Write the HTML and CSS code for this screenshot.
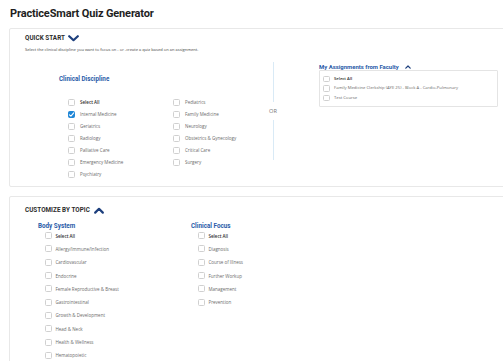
FILE: index.html
```html
<!DOCTYPE html>
<html>
<head>
<meta charset="utf-8">
<link rel="stylesheet" href="styles.css">
</head>
<body>
<h1 class="title">PracticeSmart Quiz Generator</h1>

<section class="card card-quick">
  <div class="card-head">
    <span class="head-text">QUICK START</span>
    <svg class="chev-down" width="11" height="7" viewBox="0 0 11 7"><path d="M1.2 1.2 L5.5 5.2 L9.8 1.2" fill="none" stroke="#1d3f7d" stroke-width="2.2" stroke-linecap="round" stroke-linejoin="round"/></svg>
  </div>
  <p class="desc">Select the clinical discipline you want to focus on - or -create a quiz based on an assignment.</p>
  <div class="quick-body">
    <div class="discipline">
      <h2 class="sub-title">Clinical Discipline</h2>
      <div class="disc-grid">
        <div class="disc-col first">
          <label class="item"><span class="box"></span><span class="lbl strong">Select All</span></label>
          <label class="item"><span class="box checked"><svg width="7" height="7" viewBox="0 0 7 7"><path d="M1.4 3.8 L2.9 5.2 L5.7 1.9" fill="none" stroke="#fff" stroke-width="1.1" stroke-linecap="round" stroke-linejoin="round"/></svg></span><span class="lbl">Internal Medicine</span></label>
          <label class="item"><span class="box"></span><span class="lbl">Geriatrics</span></label>
          <label class="item"><span class="box"></span><span class="lbl">Radiology</span></label>
          <label class="item"><span class="box"></span><span class="lbl">Palliative Care</span></label>
          <label class="item"><span class="box"></span><span class="lbl">Emergency Medicine</span></label>
          <label class="item"><span class="box"></span><span class="lbl">Psychiatry</span></label>
        </div>
        <div class="disc-col">
          <label class="item"><span class="box"></span><span class="lbl">Pediatrics</span></label>
          <label class="item"><span class="box"></span><span class="lbl">Family Medicine</span></label>
          <label class="item"><span class="box"></span><span class="lbl">Neurology</span></label>
          <label class="item"><span class="box"></span><span class="lbl">Obstetrics &amp; Gynecology</span></label>
          <label class="item"><span class="box"></span><span class="lbl">Critical Care</span></label>
          <label class="item"><span class="box"></span><span class="lbl">Surgery</span></label>
        </div>
      </div>
    </div>
    <div class="divider">
      <span class="vline"></span>
      <span class="or">OR</span>
      <span class="vline"></span>
    </div>
    <div class="assign">
      <div class="assign-head">
        <span class="sub-title small">My Assignments from Faculty</span>
        <svg class="chev-small" width="6" height="4" viewBox="0 0 6 4"><path d="M0.8 3.2 L3 1 L5.2 3.2" fill="none" stroke="#1d3f7d" stroke-width="1.2" stroke-linecap="round" stroke-linejoin="round"/></svg>
      </div>
      <div class="assign-box">
        <label class="aitem"><span class="box sm"></span><span class="lbl strong">Select All</span></label>
        <label class="aitem"><span class="box sm"></span><span class="lbl">Family Medicine Clerkship (AYE 25) - Block A - Cardio-Pulmonary</span></label>
        <label class="aitem"><span class="box sm"></span><span class="lbl">Test Course</span></label>
      </div>
    </div>
  </div>
</section>

<section class="card card-topic">
  <div class="card-head tall">
    <span class="head-text">CUSTOMIZE BY TOPIC</span>
    <svg class="chev-up" width="10" height="7" viewBox="0 0 10 7"><path d="M1.2 5.6 L5 1.8 L8.8 5.6" fill="none" stroke="#1d3f7d" stroke-width="2.2" stroke-linecap="round" stroke-linejoin="round"/></svg>
  </div>
  <div class="topic-body">
    <div class="topic-col body-sys">
      <h2 class="sub-title topic-title">Body System</h2>
      <label class="titem"><span class="box"></span><span class="lbl strong">Select All</span></label>
      <label class="titem"><span class="box"></span><span class="lbl">Allergy/Immune/Infection</span></label>
      <label class="titem"><span class="box"></span><span class="lbl">Cardiovascular</span></label>
      <label class="titem"><span class="box"></span><span class="lbl">Endocrine</span></label>
      <label class="titem"><span class="box"></span><span class="lbl">Female Reproductive &amp; Breast</span></label>
      <label class="titem"><span class="box"></span><span class="lbl">Gastrointestinal</span></label>
      <label class="titem"><span class="box"></span><span class="lbl">Growth &amp; Development</span></label>
      <label class="titem"><span class="box"></span><span class="lbl">Head &amp; Neck</span></label>
      <label class="titem"><span class="box"></span><span class="lbl">Health &amp; Wellness</span></label>
      <label class="titem"><span class="box"></span><span class="lbl">Hematopoietic</span></label>
    </div>
    <div class="topic-col">
      <h2 class="sub-title topic-title">Clinical Focus</h2>
      <label class="titem"><span class="box"></span><span class="lbl strong">Select All</span></label>
      <label class="titem"><span class="box"></span><span class="lbl">Diagnosis</span></label>
      <label class="titem"><span class="box"></span><span class="lbl">Course of Illness</span></label>
      <label class="titem"><span class="box"></span><span class="lbl">Further Workup</span></label>
      <label class="titem"><span class="box"></span><span class="lbl">Management</span></label>
      <label class="titem"><span class="box"></span><span class="lbl">Prevention</span></label>
    </div>
  </div>
</section>
</body>
</html>
```

FILE: styles.css
```css
html, body {
  margin: 0;
  padding: 0;
  background: #ffffff;
  overflow: hidden;
}
body {
  width: 503px;
  height: 361px;
  font-family: "Open Sans", "Liberation Sans", sans-serif;
  color: #333;
}
.title {
  margin: 0;
  height: 28px;
  line-height: 27px;
  padding-left: 10px;
  font-family: Roboto, "Liberation Sans", sans-serif;
  font-weight: 700;
  font-size: 11px;
  letter-spacing: -0.15px;
  color: #1e1e1e;
}
.card {
  margin-left: 9px;
  width: 540px;
  border: 1px solid #e8e8e8;
  border-radius: 2px;
  background: #fff;
}
.card-quick {
  height: 157px;
}
.card-topic {
  margin-top: 9px;
  height: 200px;
}
.card-head {
  height: 18px;
  display: flex;
  align-items: center;
  padding-left: 15px;
}
.card-head.tall {
  height: 26px;
}
.head-text {
  font-family: Roboto, "Liberation Sans", sans-serif;
  font-weight: 700;
  font-size: 6.3px;
  color: #2b2b2b;
  letter-spacing: 0.05px;
}
.chev-down {
  margin-left: 3px;
}
.chev-up {
  margin-left: 4px;
  margin-top: 1px;
}
.desc {
  margin: 0;
  padding-left: 15px;
  height: 6px;
  line-height: 6px;
  font-size: 4.05px;
  color: #444;
}
.quick-body {
  display: flex;
  margin-top: 9px;
  padding-left: 49px;
}
.discipline {
  width: 208px;
  padding-top: 13px;
}
.sub-title {
  margin: 0;
  font-family: Roboto, "Liberation Sans", sans-serif;
  font-weight: 700;
  font-size: 6.3px;
  line-height: 8px;
  color: #2a5ba8;
}
.sub-title.small {
  font-size: 5.95px;
  line-height: 7px;
}
.disc-grid {
  display: flex;
  margin-top: 13px;
  margin-left: 9px;
}
.disc-col {
  display: flex;
  flex-direction: column;
}
.disc-col.first {
  width: 105px;
}
.item {
  display: flex;
  align-items: center;
  gap: 5px;
  height: 12px;
}
.box {
  box-sizing: border-box;
  width: 7px;
  height: 7px;
  border: 1px solid #d0d0d0;
  border-radius: 1.5px;
  background: #fff;
  flex: none;
  display: flex;
  align-items: center;
  justify-content: center;
}
.box.checked {
  background: #1f86d6;
  border-color: #1f86d6;
}
.box.checked svg {
  display: block;
  margin: -1px;
}
.box.sm {
  width: 6.5px;
  height: 6.5px;
}
.lbl {
  font-size: 4.5px;
  line-height: 6px;
  color: #6b6b6b;
  white-space: nowrap;
}
.lbl.strong {
  color: #2d2d2d;
  font-weight: 600;
}
.divider {
  width: 12px;
  display: flex;
  flex-direction: column;
  align-items: center;
}
.vline {
  width: 1px;
  height: 40px;
  background: #d9eaf6;
}
.or {
  height: 18px;
  line-height: 18px;
  font-size: 5.6px;
  color: #777;
}
.assign {
  margin-left: 40px;
  width: 179px;
}
.assign-head {
  display: flex;
  align-items: center;
  gap: 6px;
  height: 8px;
}
.chev-small {
  margin-top: 2px;
}
.assign-box {
  box-sizing: border-box;
  height: 37px;
  border: 1px solid #e4e4e4;
  border-radius: 1px;
  padding: 3px 0 0 3px;
  display: flex;
  flex-direction: column;
}
.aitem {
  display: flex;
  align-items: center;
  gap: 4.5px;
  height: 9.5px;
}
.aitem .lbl {
  font-size: 4.2px;
}
.topic-body {
  display: flex;
  padding-left: 28px;
}
.topic-col {
  display: flex;
  flex-direction: column;
}
.topic-col.body-sys {
  width: 153px;
}
.topic-title {
  line-height: 6px;
}
.titem {
  display: flex;
  align-items: center;
  gap: 3.5px;
  height: 13.3px;
  margin-left: 7px;
}
```
